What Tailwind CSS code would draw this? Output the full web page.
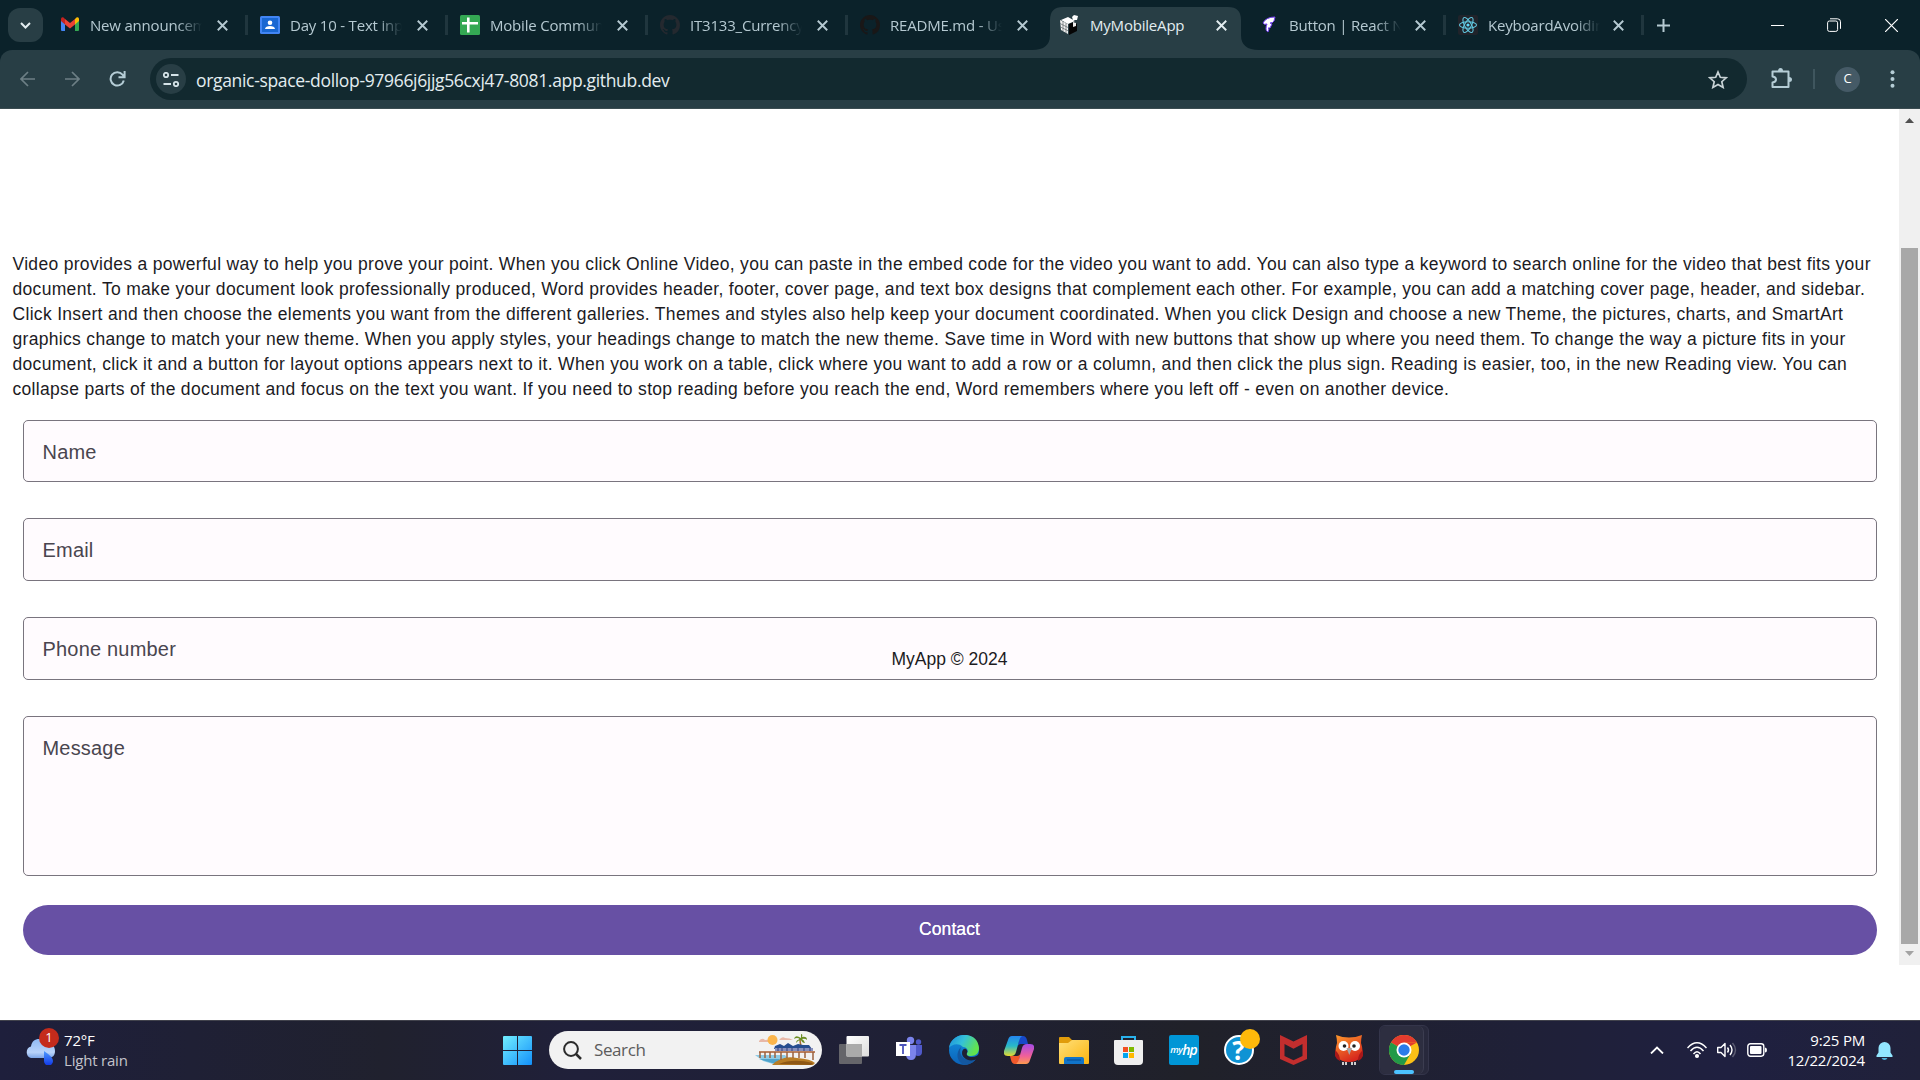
<!DOCTYPE html>
<html lang="en">
<head>
<meta charset="utf-8">
<title>MyMobileApp</title>
<script src="https://cdn.jsdelivr.net/npm/@tailwindcss/browser@4"></script>
</head>
<body class="flex h-[1080px] w-[1920px] flex-col overflow-hidden bg-white font-['Open_Sans',sans-serif]">

<svg class="hidden">
  <symbol id="x" viewBox="0 0 10 10"><path d="M.7.7l8.6 8.6M9.3.7L.7 9.3" stroke="currentColor" stroke-width="1.7" fill="none"/></symbol>
  <symbol id="gh" viewBox="0 0 16 16"><path fill="currentColor" d="M8 0C3.58 0 0 3.58 0 8c0 3.54 2.29 6.53 5.47 7.59.4.07.55-.17.55-.38 0-.19-.01-.82-.01-1.49-2.01.37-2.53-.49-2.69-.94-.09-.23-.48-.94-.82-1.13-.28-.15-.68-.52-.01-.53.63-.01 1.08.58 1.23.82.72 1.21 1.87.87 2.33.66.07-.52.28-.87.51-1.07-1.78-.2-3.64-.89-3.64-3.95 0-.87.31-1.59.82-2.15-.08-.2-.36-1.02.08-2.12 0 0 .67-.21 2.2.82.64-.18 1.32-.27 2-.27s1.36.09 2 .27c1.53-1.04 2.2-.82 2.2-.82.44 1.1.16 1.92.08 2.12.51.56.82 1.27.82 2.15 0 3.07-1.87 3.75-3.65 3.95.29.25.54.73.54 1.48 0 1.07-.01 1.93-.01 2.2 0 .21.15.46.55.38A8.01 8.01 0 0 0 16 8c0-4.42-3.58-8-8-8z"/></symbol>
</svg>

<!-- Tab strip -->
<header class="flex h-[50px] shrink-0 items-center bg-[#0b222a] pl-2 text-[15px] tracking-[-0.2px] text-[#b5c9d1]">
  <button class="mr-[5px] flex h-[34px] w-[35px] items-center justify-center rounded-xl bg-[#283e45]">
    <svg class="h-[7px] w-[11px]" viewBox="0 0 11 7"><path d="M1 1l4.500 4.500L10 1" stroke="#e3edf0" stroke-width="2" fill="none"/></svg>
  </button>

  <div class="flex h-5 w-[200px] items-center border-r-[3px] border-[#20363e] pl-3">
    <svg class="h-5 w-5 shrink-0" viewBox="0 0 20 20"><path d="M1 5h4v11H2a1 1 0 0 1-1-1z" fill="#4285f4"/><path d="M15 5h4v10a1 1 0 0 1-1 1h-3z" fill="#34a853"/><path d="M15 4l1.500-1.400C18 1.500 19 3 19 4v2l-4 3.500z" fill="#fbbc04"/><path d="M5 4L3.500 2.600C2 1.500 1 3 1 4v2l4 3.500z" fill="#c5221f"/><path d="M5 4l5 4 5-4v5.500l-5 4-5-4z" fill="#ea4335"/></svg>
    <span class="ml-[10px] w-[112px] pt-px whitespace-nowrap [mask-image:linear-gradient(to_right,black_78%,transparent)]">New announcem</span>
    <svg class="ml-[15px] h-[11px] w-[11px] shrink-0"><use href="#x"/></svg>
  </div>
  <div class="flex h-5 w-[200px] items-center border-r-[3px] border-[#20363e] pl-3">
    <svg class="h-5 w-5 shrink-0" viewBox="0 0 20 20"><rect y="1" width="20" height="18" rx="1.500" fill="#4285f4"/><rect x="2" y="3" width="16" height="14" fill="#1967d2"/><circle cx="10" cy="7.700" r="2.300" fill="#fff"/><path d="M5 14c0-4 10-4 10 0z" fill="#fff"/></svg>
    <span class="ml-[10px] w-[112px] pt-px whitespace-nowrap [mask-image:linear-gradient(to_right,black_78%,transparent)]">Day 10 - Text inp</span>
    <svg class="ml-[15px] h-[11px] w-[11px] shrink-0"><use href="#x"/></svg>
  </div>
  <div class="flex h-5 w-[200px] items-center border-r-[3px] border-[#20363e] pl-3">
    <svg class="h-5 w-5 shrink-0" viewBox="0 0 20 20"><rect width="20" height="20" rx="1.500" fill="#34a853"/><path d="M8.300 2.500v15M2 8.300h16" stroke="#fff" stroke-width="2.600"/></svg>
    <span class="ml-[10px] w-[112px] pt-px whitespace-nowrap [mask-image:linear-gradient(to_right,black_78%,transparent)]">Mobile Commun</span>
    <svg class="ml-[15px] h-[11px] w-[11px] shrink-0"><use href="#x"/></svg>
  </div>
  <div class="flex h-5 w-[200px] items-center border-r-[3px] border-[#20363e] pl-3">
    <svg class="h-5 w-5 shrink-0 text-[#24292f]"><use href="#gh"/></svg>
    <span class="ml-[10px] w-[112px] pt-px whitespace-nowrap [mask-image:linear-gradient(to_right,black_78%,transparent)]">IT3133_Currency_</span>
    <svg class="ml-[15px] h-[11px] w-[11px] shrink-0"><use href="#x"/></svg>
  </div>
  <div class="flex h-5 w-[198px] items-center pl-3">
    <svg class="h-5 w-5 shrink-0 text-[#191717]"><use href="#gh"/></svg>
    <span class="ml-[10px] w-[112px] pt-px whitespace-nowrap [mask-image:linear-gradient(to_right,black_78%,transparent)]">README.md - Us</span>
    <svg class="ml-[15px] h-[11px] w-[11px] shrink-0"><use href="#x"/></svg>
  </div>
  <div class="relative flex h-[50px] w-[200px] items-center pl-[14px] text-[#e3edf0]">
    <svg class="absolute top-[7px] -left-[14px] h-[43px] w-[227px]" viewBox="0 0 227 43"><path d="M0 43q18 0 18-15V13Q18 0 31 0h165q13 0 13 13v15q0 15 18 15z" fill="#283e45"/></svg>
    <svg class="relative h-5 w-5 shrink-0" viewBox="0 0 20 20"><path d="M1 5l7-3 7 4-7 3zM12 2l2-2 4 1-1 4-4 0z" fill="#fff"/><path d="M0 5l8 4v10l-7-4z" fill="#f1f1f1"/><path d="M9 9l5-2 3 2v7l-8 4z" fill="#050505"/><path d="M0 8.500l8 4M.5 12l8 4M3 6v10M6 8v10" stroke="#5c6669" stroke-width=".7" fill="none"/><path d="M13 7l3 1v3l-3 1z" fill="#eee"/></svg>
    <span class="relative ml-[10px] w-[112px] pt-px whitespace-nowrap">MyMobileApp</span>
    <svg class="relative ml-[14px] h-[11px] w-[11px] shrink-0"><use href="#x"/></svg>
  </div>
  <div class="flex h-5 w-[200px] items-center border-r-[3px] border-[#20363e] pl-[13px]">
    <svg class="h-5 w-5 shrink-0" viewBox="0 0 20 20"><path d="M4 8Q7 2 16 2l-1 4q-1 2-4 2l2 1-2 4H9l1 1-1 3q-2-1-2-3 0-3 1-5Q5 10 4 8z" fill="#fff" stroke="#7440f0" stroke-width="1"/></svg>
    <span class="ml-[10px] w-[112px] pt-px whitespace-nowrap [mask-image:linear-gradient(to_right,black_78%,transparent)]">Button | React Na</span>
    <svg class="ml-[14px] h-[11px] w-[11px] shrink-0"><use href="#x"/></svg>
  </div>
  <div class="flex h-5 w-[198px] items-center border-r-[3px] border-[#20363e] pl-3">
    <svg class="h-5 w-5 shrink-0" viewBox="0 0 20 20"><rect width="20" height="20" rx="2" fill="#20232a"/><g fill="none" stroke="#61c8e0" stroke-width="1.100"><ellipse cx="10" cy="10" rx="8.500" ry="3.300"/><ellipse cx="10" cy="10" rx="8.500" ry="3.300" transform="rotate(60 10 10)"/><ellipse cx="10" cy="10" rx="8.500" ry="3.300" transform="rotate(120 10 10)"/></g><circle cx="10" cy="10" r="1.600" fill="#61dafb"/></svg>
    <span class="ml-[10px] w-[112px] pt-px whitespace-nowrap [mask-image:linear-gradient(to_right,black_78%,transparent)]">KeyboardAvoidin</span>
    <svg class="ml-[13px] h-[11px] w-[11px] shrink-0"><use href="#x"/></svg>
  </div>
  <svg class="ml-[13px] h-[13px] w-[13px]" viewBox="0 0 13 13"><path d="M6.500 0v13M0 6.500h13" stroke="currentColor" stroke-width="2"/></svg>
  <div class="ml-auto flex items-center text-white">
    <div class="flex w-[57px] justify-center"><svg class="h-[13px] w-[13px]" viewBox="0 0 13 13"><path d="M0 6.500h13" stroke="currentColor"/></svg></div>
    <div class="flex w-[57px] justify-center pr-[2px]"><svg class="h-[14px] w-[14px]" viewBox="0 0 14 14" fill="none" stroke="currentColor"><rect x=".6" y="3" width="10" height="10.400" rx="1.800"/><path d="M3 .8h7.500q3 0 3 3v7"/></svg></div>
    <div class="flex w-[57px] justify-center"><svg class="h-[13px] w-[13px]" viewBox="0 0 13 13"><path d="M0 0l13 13M13 0L0 13" stroke="currentColor" stroke-width="1.200"/></svg></div>
  </div>
</header>

<!-- Address bar -->
<div class="h-[59px] shrink-0 bg-[#0b222a]">
  <div class="flex h-full items-center rounded-t-xl border-b border-[#3b4c51] bg-[#283e45] pl-5 text-[#b5cdd6]">
    <svg class="h-4 w-[15px] text-[#6d7f85]" viewBox="0 0 15 16" fill="none" stroke="currentColor" stroke-width="1.700"><path d="M15 8H1.500M8 1L1 8l7 7"/></svg>
    <svg class="ml-[30px] h-4 w-[15px] text-[#6d7f85]" viewBox="0 0 15 16" fill="none" stroke="currentColor" stroke-width="1.700"><path d="M0 8h13.500M7 1l7 7-7 7"/></svg>
    <svg class="ml-[29px] h-4 w-[17px]" viewBox="0 0 17 16" fill="none" stroke="currentColor" stroke-width="2"><path d="M14.800 9.500A6.700 6.700 0 1 1 13.500 3.600L15.500 6M15.600 0v6.300H9.500"/></svg>
    <div class="ml-6 flex h-[42px] w-[1597px] items-center rounded-full bg-[#12292f] pl-[6px]">
      <div class="flex h-[30px] w-[30px] items-center justify-center rounded-full bg-[#283e45]">
        <svg class="h-[15px] w-4" viewBox="0 0 16 15" fill="none" stroke="#d5e3e8" stroke-width="1.800"><circle cx="3" cy="3" r="2.200"/><path d="M8 3h7.500M.5 12H8"/><circle cx="13" cy="12" r="2.200"/></svg>
      </div>
      <span class="ml-[10px] pt-px text-[17.5px] leading-6 tracking-[-0.33px] whitespace-nowrap text-[#e3edf0]">organic-space-dollop-97966j6jjg56cxj47-8081.app.github.dev</span>
      <svg class="mr-[19px] ml-auto h-[19px] w-5" viewBox="0 0 20 19" fill="none" stroke="#c8d3d6" stroke-width="1.700"><path d="M10 2l2.300 5.300 5.900.5-4.400 3.900 1.300 5.700-5.100-3-5.100 3 1.300-5.700L1.800 7.800l5.900-.5z"/></svg>
    </div>
    <svg class="-mt-0.5 ml-6 h-[21px] w-[21px]" viewBox="0 0 21 21" fill="none" stroke="currentColor" stroke-width="2"><path d="M1.500 3.500h16v15.500h-16v-4.500q3.500-.5 3.500-3t-3.500-3z" stroke-linejoin="round"/><path d="M7 3q0-3 2.500-3T12 3zM18 9q3 0 3 2.500T18 14z" fill="currentColor" stroke="none"/></svg>
    <div class="ml-[21px] h-5 w-[2px] bg-[#3f565e]"></div>
    <div class="ml-5 flex h-[25px] w-[25px] items-center justify-center rounded-full bg-[#455a66] text-[13px] font-medium text-white">C</div>
    <svg class="ml-[30px] h-[18px] w-[5px]" viewBox="0 0 5 18" fill="currentColor"><circle cx="2.500" cy="2.200" r="2"/><circle cx="2.500" cy="9" r="2"/><circle cx="2.500" cy="15.800" r="2"/></svg>
  </div>
</div>

<!-- App page -->
<div class="relative flex h-[856px] shrink-0 font-['Liberation_Sans',Arial,sans-serif]">
  <main class="w-[1899px] px-[12.5px] pt-[142.5px]">
    <p class="text-[17.5px] leading-[25px] tracking-[0.3125px] text-[#1c1b1f]">Video provides a powerful way to help you prove your point. When you click Online Video, you can paste in the embed code for the video you want to add. You can also type a keyword to search online for the video that best fits your document. To make your document look professionally produced, Word provides header, footer, cover page, and text box designs that complement each other. For example, you can add a matching cover page, header, and sidebar. Click Insert and then choose the elements you want from the different galleries. Themes and styles also help keep your document coordinated. When you click Design and choose a new Theme, the pictures, charts, and SmartArt graphics change to match your new theme. When you apply styles, your headings change to match the new theme. Save time in Word with new buttons that show up where you need them. To change the way a picture fits in your document, click it and a button for layout options appears next to it. When you work on a table, click where you want to add a row or a column, and then click the plus sign. Reading is easier, too, in the new Reading view. You can collapse parts of the document and focus on the text you want. If you need to stop reading before you reach the end, Word remembers where you left off - even on another device.</p>
    <form class="mt-[18.5px] mr-[9.5px] ml-[10.5px] flex flex-col text-[20px] tracking-[0.19px] text-[#49454f]">
      <div class="flex h-[62px] items-center rounded-[5px] border border-[#79747e] bg-[#fffbfe] pt-[2px] pl-[18.500px]">Name</div>
      <div class="mt-9 flex h-[63px] items-center rounded-[5px] border border-[#79747e] bg-[#fffbfe] pl-[18.500px]">Email</div>
      <div class="mt-9 flex h-[63px] items-center rounded-[5px] border border-[#79747e] bg-[#fffbfe] pl-[18.500px]">Phone number</div>
      <div class="mt-9 h-[160px] rounded-[5px] border border-[#79747e] bg-[#fffbfe] pt-4 pl-[18.500px]">Message</div>
      <button type="button" class="mt-[29px] h-[50px] rounded-full bg-[#6750a4] pr-px pb-px text-[17.5px] tracking-[0.1px] text-white [text-shadow:0_0_0.5px_white]">Contact</button>
    </form>
  </main>
  <div class="absolute top-[538px] left-0 w-[1899px] text-center text-[17.5px] leading-[25px] text-[#1c1b1f]">MyApp © 2024</div>
  <div class="flex w-[21px] flex-col items-center bg-[#f0f0f0]">
    <svg class="mt-[9px] h-[5px] w-[9px]" viewBox="0 0 9 5"><path d="M0 5L4.500 0 9 5z" fill="#505050"/></svg>
    <div class="mt-[125px] h-[696px] w-[17px] bg-[#a8a8a8]"></div>
    <svg class="mt-[7px] h-[5px] w-[9px]" viewBox="0 0 9 5"><path d="M0 0l4.500 5L9 0z" fill="#a3a3a3"/></svg>
  </div>
</div>
<div class="h-[55px] shrink-0 bg-white"></div>

<!-- Taskbar -->
<footer class="flex h-[60px] shrink-0 items-center border-t border-[#41424c] bg-[linear-gradient(90deg,#1e1f3c_0%,#20212e_20%,#20203a_30%,#1f2035_48%,#202129_62%,#1f2038_80%,#1f2040_90%,#20213a_100%)] pb-px text-white">
  <div class="flex w-[503px] items-center pl-6">
    <div class="relative h-9 w-[34px]">
      <svg class="-mt-[3px] h-9 w-[34px]" viewBox="0 0 34 36"><defs><linearGradient id="cl" x2="0" y2="1"><stop stop-color="#8fbaf4"/><stop offset=".7" stop-color="#b9d3fa"/><stop offset="1" stop-color="#7da6e8"/></linearGradient><linearGradient id="dr" x2="0" y2="1"><stop stop-color="#4f9cff"/><stop offset="1" stop-color="#1037e8"/></linearGradient></defs><path d="M7 29a6 6 0 0 1 0-11.500C8 8 20 8 22 15c5-2 9 2 9 7s-3 7-7 7z" fill="url(#cl)"/><path d="M20 22q9 6 9 10a4.500 4.500 0 0 1-9 0z" fill="url(#dr)"/></svg>
      <div class="absolute -top-[4px] left-[15px] flex h-5 w-5 items-center justify-center rounded-full bg-[#c42b1c] text-[13px]">1</div>
    </div>
    <div class="ml-[6px] text-[15px] leading-5 tracking-[-0.2px]"><div>72°F</div><div class="text-[#c3c3cb]">Light rain</div></div>
  </div>
  <svg class="h-[29px] w-[29px]" viewBox="0 0 29 29"><defs><linearGradient id="w" x2="1" y2="1"><stop stop-color="#72efff"/><stop offset="1" stop-color="#1390fa"/></linearGradient></defs><path d="M0 1q0-1 1-1h13v14H0zM15 0h13q1 0 1 1v13H15zM0 15h14v14H1q-1 0-1-1zM15 15h14v13q0 1-1 1H15z" fill="url(#w)"/></svg>
  <div class="ml-[17px] flex h-[38px] w-[273px] items-center rounded-full bg-[#f2f2f2] pl-[14px]">
    <svg class="h-[19px] w-[19px]" viewBox="0 0 19 19" fill="none" stroke="#2b2b2b"><circle cx="8" cy="8" r="6.900" stroke-width="2"/><path d="M13 13l5 5" stroke-width="2.500"/></svg>
    <span class="ml-[12px] text-[17px] tracking-[-0.4px] text-[#5c5c5c]">Search</span>
    <svg class="mr-[5px] ml-auto h-[32px] w-[62px]" viewBox="0 0 62 32">
      <path d="M4 7q3-4 6-1 6-1 7 2H4zM24 6q3-4 6-2 5 0 8 2H24z" fill="#e8b8a8"/><circle cx="17.500" cy="6" r="5" fill="#fbb54b"/>
      <path d="M0 21h30l8 9H18L8 27z" fill="#8ecbe4"/><path d="M4 25h20l5 4H17z" fill="#4fa3cb"/>
      <path d="M17 31q10-10 25-7 14 1 18 5l-2 2z" fill="#b87c25"/><path d="M24 30q14-6 34-1l-2 2z" fill="#8e5715"/>
      <path d="M45 4q0 5 1 8" stroke="#a96b2d" stroke-width="1.500" fill="none"/><path d="M46 4q-6-4-7 1 3-2 6 0-4 1-4 4 2-3 5-3 1 3 4 3-1-3-3-4 3-1 5 1 0-4-5-3 1-3-1-3z" fill="#6b8d24"/>
      <path d="M20 12l5-2 4 2 4-3 5 3 5-2 5 1 6 0 3 4H19z" fill="#264d8f"/><path d="M20 14h38v5H20z" fill="#8790bd"/><path d="M23 14v5m4-5v5m5-5v5m5-5v5m6-5v5m6-5v5m6-5v5" stroke="#4d5a91" stroke-width="1.500"/><path d="M4 18h56" stroke="#bb805e" stroke-width="2"/><path d="M5 18v6m5-6v6m5-6v6m5-6v6m6-6v8m6-8v6m6-6v6m6-6v6m6-6v6m8-6v8" stroke="#9c623e" stroke-width="1.500"/>
    </svg>
  </div>
  <div class="ml-[4px] flex h-[50px] items-center">
    <div class="flex w-[55px] justify-center"><svg class="h-7 w-[30px]" viewBox="0 0 30 28"><defs><linearGradient id="tv" x2="1" y2="1"><stop stop-color="#fff"/><stop offset="1" stop-color="#ddd"/></linearGradient></defs><rect y="8" width="23" height="20" rx="1" fill="#65656a"/><rect x="7.500" width="22.500" height="20.500" rx="1" fill="url(#tv)"/><path d="M7.500 8H23v12.500H7.500z" fill="#aaa"/></svg></div>
    <div class="flex w-[55px] justify-center pb-[3px]"><svg class="h-[26px] w-[26px]" viewBox="0 0 26 26"><circle cx="14.500" cy="4.500" r="3.700" fill="#7b83eb"/><circle cx="22.500" cy="6" r="2.700" fill="#5059c9"/><path d="M18 9h8v7q0 4-4 4-3 0-4-3z" fill="#5059c9"/><path d="M10 9h10v9q0 6-5 6t-5-6z" fill="#7b83eb"/><path d="M0 6h14v14H0z" fill="#fff"/><path d="M3.500 9h7M7 9v9" stroke="#4b53bc" stroke-width="1.800"/></svg></div>
    <div class="flex w-[55px] justify-center"><svg class="h-[30px] w-[30px]" viewBox="0 0 30 30"><defs><linearGradient id="e1" x2="1" y2=".4"><stop stop-color="#1b8ddd"/><stop offset=".5" stop-color="#35c1d8"/><stop offset="1" stop-color="#62e34e"/></linearGradient><linearGradient id="e2" x2="0" y2="1"><stop stop-color="#1490df"/><stop offset="1" stop-color="#0b62b8"/></linearGradient></defs><circle cx="15" cy="15" r="15" fill="url(#e2)"/><path d="M0 13C2-4 29-5 30 13c0 5-3 8-8 8-4 0-5-1-4-3 2-2 0-6-4-6-5-5-12-2-14 1z" fill="url(#e1)"/><path d="M12 12c-3 8 2 15 15 12-3 4-8 6-12 6-7-3-9-12-3-18z" fill="#1357a0"/><path d="M18 18c-1 2 1 4 5 4 3 0 5-1 7-3v6l-2-1c-8 4-15-1-15-6 0-3 2-5 4-4 1 1 2 2 1 4z" fill="#1f2033"/></svg></div>
    <div class="flex w-[55px] justify-center"><svg class="h-[28px] w-[30px]" viewBox="0 0 30 28"><defs><linearGradient id="c1" x2="0" y2="1"><stop stop-color="#2486f0"/><stop offset=".5" stop-color="#28b9c8"/><stop offset="1" stop-color="#e5dc2e"/></linearGradient><linearGradient id="c2" x2="0" y2="1"><stop stop-color="#a44be8"/><stop offset=".6" stop-color="#f0609a"/><stop offset="1" stop-color="#fd9a4e"/></linearGradient></defs><path d="M16 0h3q3 0 4 4l1 4h-7q-3 0-4 4z" fill="#1749c9"/><path d="M14 28h-3q-3 0-4-4l-1-4h7q3 0 4-4z" fill="#f0592b"/><path d="M8 0h10q-2 1-3 5l-3 11q-1 4-5 4H4q-5 0-4-5L4 4q1-4 4-4z" fill="url(#c1)"/><path d="M22 28H12q2-1 3-5l3-11q1-4 5-4h3q5 0 4 5l-4 11q-1 4-4 4z" fill="url(#c2)"/></svg></div>
    <div class="flex w-[55px] justify-center"><svg class="h-[27px] w-[30px]" viewBox="0 0 30 27"><defs><linearGradient id="f" x2="1" y2="1"><stop stop-color="#ffe07a"/><stop offset="1" stop-color="#fbb40e"/></linearGradient></defs><path d="M0 1q0-1 1-1h9l3 3h10v5H0z" fill="#e19c0b"/><path d="M0 6h9l4-3h16q1 0 1 1v22q0 1-1 1H1q-1 0-1-1z" fill="url(#f)"/><path d="M5 27v-5q0-2 2-2h16q2 0 2 2v5z" fill="#1174c9"/><path d="M8 23h14" stroke="#074a91"/></svg></div>
    <div class="flex w-[55px] justify-center"><svg class="h-[29px] w-[29px]" viewBox="0 0 29 29"><path d="M8 5V1h13v4" stroke="#29b2ed" stroke-width="2" fill="none"/><path d="M0 5q0-1 1-1h27q1 0 1 1v20q0 4-4 4H4q-4 0-4-4z" fill="#efefef"/><path d="M9 11h5v5H9z" fill="#f25022"/><path d="M15 11h5v5h-5z" fill="#7fba00"/><path d="M9 17h5v5H9z" fill="#00a4ef"/><path d="M15 17h5v5h-5z" fill="#ffb900"/></svg></div>
    <div class="flex w-[55px] justify-center"><div class="flex h-[30px] w-[30px] items-center justify-center rounded-[2px] bg-[#0096d6] text-[9.5px] leading-none font-semibold tracking-[-0.5px] italic">my<span class="text-[14px] tracking-[-1px]">hp</span></div></div>
    <div class="flex w-[55px] justify-center"><div class="relative flex h-[30px] w-[30px] items-center justify-center rounded-full border-2 border-white bg-[#0f93d4] text-[26px] leading-none font-bold">?<span class="absolute -top-2 left-[14px] h-5 w-5 rounded-full bg-[#ffb90a]"></span></div></div>
    <div class="flex w-[55px] justify-center"><svg class="h-[30px] w-[27px]" viewBox="0 0 27 30"><path d="M0 0l13.500 6.500L27 0v24l-13.500 6L0 24zM4.500 9v12l9 4.200 9-4.200V9l-9 4.800z" fill="#c22e2e" fill-rule="evenodd"/></svg></div>
    <div class="flex w-[55px] justify-center"><svg class="h-[30px] w-7" viewBox="0 0 28 30"><defs><linearGradient id="o" x2=".5" y2="1"><stop stop-color="#ff9a2d"/><stop offset="1" stop-color="#d7281d"/></linearGradient></defs><path d="M1 0q13 5 26 0-1 4-1 8 3 9 0 14-4 5-12 5T2 22q-3-5 0-14 0-4-1-8z" fill="url(#o)"/><path d="M0 15q5 4 5 11-7-3-5-11zM28 15q-5 4-5 11 7-3 5-11z" fill="#a91819"/><circle cx="8.500" cy="11" r="5" fill="#fff"/><circle cx="20" cy="11" r="5" fill="#fff"/><circle cx="9.500" cy="11" r="1.800" fill="#222"/><circle cx="19" cy="11" r="1.800" fill="#222"/><path d="M11.500 13h5.500l-2.700 7z" fill="#a7a7a7"/><path d="M8 27v3m3-3v3m6-3v3m3-3v3" stroke="#ccc" stroke-width="2"/></svg></div>
    <div class="relative ml-[2.5px] flex h-[50px] w-[50px] items-center rounded-md border border-[#34354a] bg-[#28293c]">
      <div class="flex h-full w-[44px] justify-center rounded-md border-r border-[#3c3d50] bg-[#2d2e40] pt-[9px] pl-[5px]">
        <svg class="h-[30px] w-[30px]" viewBox="0 0 30 30"><circle cx="15" cy="15" r="15" fill="#fbc116"/><path d="M15 15L2 7.500A15 15 0 0 1 28 7.500H15z" fill="#e33b2e"/><path d="M2 7.500A15 15 0 0 0 15 30l6.500-11.200L15 15z" fill="#229a48"/><path d="M28 7.500H15v7z" fill="#e33b2e"/><circle cx="15" cy="15" r="7.500" fill="#fff"/><circle cx="15" cy="15" r="5.700" fill="#2a7be9"/></svg>
      </div>
      <span class="absolute bottom-0 left-[14px] h-1 w-5 rounded-full bg-[#4cc2ff]"></span>
    </div>
  </div>
  <div class="ml-auto flex items-center pr-[27px]">
    <svg class="h-2 w-[14px]" viewBox="0 0 14 8"><path d="M1 7.500l6-6 6 6" stroke="#fff" stroke-width="1.800" fill="none"/></svg>
    <svg class="ml-[23px] h-[17px] w-5" viewBox="0 0 20 17" fill="none" stroke="#fff" stroke-width="1.500"><path d="M.5 6Q10-4.500 19.500 6M3.500 9Q10 1.500 16.500 9M6.500 12Q10 7.500 13.500 12"/><circle cx="10" cy="14" r="1.300" fill="#fff"/></svg>
    <svg class="ml-[10px] h-4 w-5" viewBox="0 0 20 16" fill="none" stroke="#fff" stroke-width="1.400"><path d="M.7 5.500H4l4-4v13l-4-4H.7z" stroke-linejoin="round"/><path d="M10.500 5.500q2 2.500 0 5M13 3q4 5 0 10"/><path d="M15.500 1q6 7 0 14" stroke="#5d5d73"/></svg>
    <svg class="ml-[10px] h-[14px] w-5" viewBox="0 0 20 14"><rect x=".8" y=".8" width="16" height="12.400" rx="2.600" fill="none" stroke="#fff" stroke-width="1.400"/><rect x="3" y="3" width="11.500" height="8" rx="1" fill="#fff"/><path d="M18 4.500q2 0 2 2.500t-2 2.500z" fill="#fff"/></svg>
    <div class="ml-5 w-[78px] text-right text-[15px] leading-5 tracking-[-0.2px] whitespace-nowrap"><div>9:25 PM</div><div>12/22/2024</div></div>
    <svg class="ml-[11px] h-[19px] w-[17px]" viewBox="0 0 17 19"><path d="M.5 16v-1.500l2-3V7a6 6 0 0 1 12 0v4.500l2 3V16z" fill="#92e6ff"/><path d="M5.500 17h6q-1 2-3 2t-3-2z" fill="#4fb2dc"/></svg>
  </div>
</footer>
</body>
</html>
